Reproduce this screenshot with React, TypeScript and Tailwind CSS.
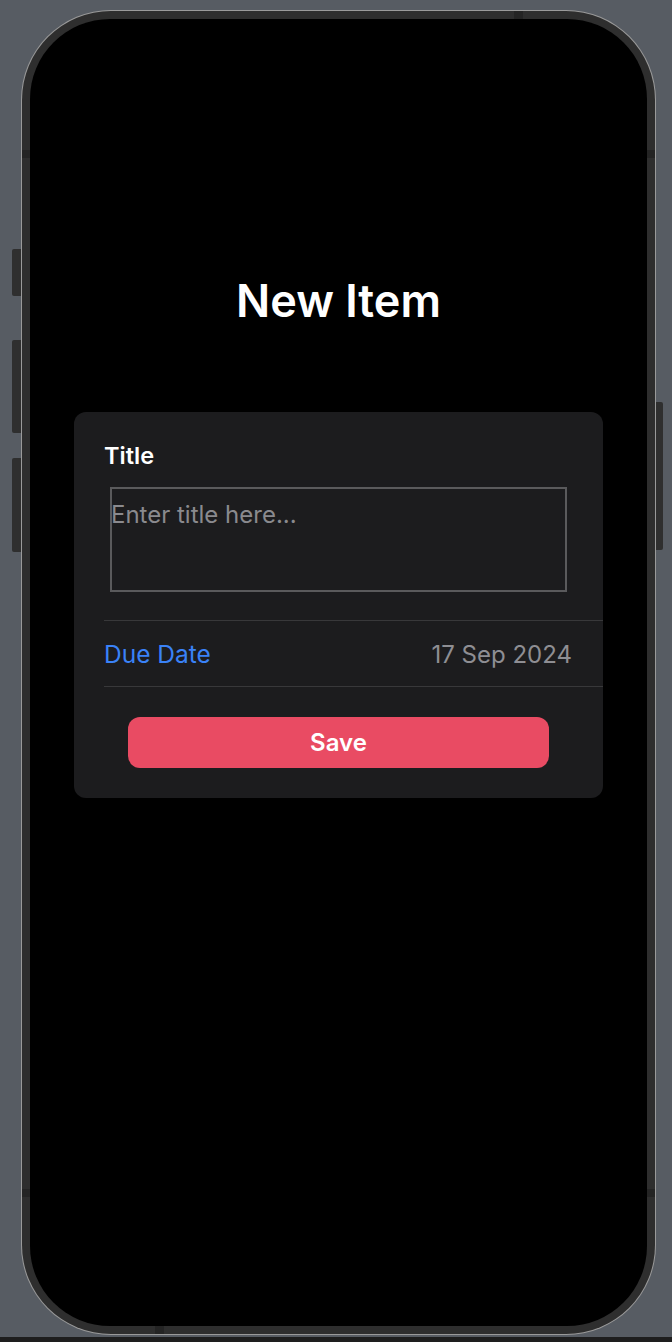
import React from "react";

export default function App() {
  const font = { fontFamily: "Inter, 'Noto Sans', sans-serif" };
  return (
    <div className="w-[672px] h-[1342px] bg-[#575c63] relative overflow-hidden" style={font}>
      {/* side buttons */}
      <div className="absolute left-[12px] top-[249px] w-[9px] h-[47px] bg-[#2f2f2f] rounded-l-[2px]" />
      <div className="absolute left-[12px] top-[340px] w-[9px] h-[93px] bg-[#2f2f2f] rounded-l-[2px]" />
      <div className="absolute left-[12px] top-[458px] w-[9px] h-[94px] bg-[#2f2f2f] rounded-l-[2px]" />
      <div className="absolute left-[655px] top-[402px] w-[8px] h-[148px] bg-[#2f2f2f] rounded-r-[2px]" />
      <div className="pt-[10px] pl-[21px]">
        <div className="relative w-[635px] h-[1325px] rounded-[90px] bg-[#9a9a9a] p-[1px]">
          <div className="w-full h-full rounded-[89px] bg-[#2e2e2e] p-[8px]">
            <div className="w-full h-full rounded-[80px] bg-black flex flex-col items-center">
              <h1 className="mt-[259px] text-[45px] leading-[46px] font-semibold text-white">New Item</h1>
              <div className="mt-[88px] w-[529px] bg-[#1c1c1e] rounded-[12px] pl-[30px] flex flex-col">
                <div className="pt-[29px] text-[23.5px] leading-[30px] font-semibold text-white">Title</div>
                <div className="mt-[16px] ml-[6px] w-[457px] h-[105px] border-2 border-[#5a5a5c] pt-[11px]">
                  <span className="text-[24px] leading-[30px] text-[#8a8a8e] ml-[-1px]">Enter title here...</span>
                </div>
                <div className="mt-[28px] h-[1px] bg-[#38383a]" />
                <div className="h-[65px] flex items-center justify-between pr-[31px] pt-[2px]">
                  <span className="text-[24.5px] text-[#3a82f7]">Due Date</span>
                  <span className="text-[24px] text-[#8e8e93]">17 Sep 2024</span>
                </div>
                <div className="h-[1px] bg-[#38383a]" />
                <div className="pt-[30px] pb-[30px] pr-[30px] flex justify-center">
                  <div className="w-[421px] h-[51px] rounded-[12px] bg-[#e94b63] flex items-center justify-center text-white text-[24px] font-semibold">
                    Save
                  </div>
                </div>
              </div>
            </div>
          </div>
          {/* antenna bands */}
          <div className="absolute left-[1px] top-[140px] w-[8px] h-[8px] bg-[#242424]" />
          <div className="absolute right-[1px] top-[140px] w-[8px] h-[8px] bg-[#242424]" />
          <div className="absolute left-[1px] top-[1179px] w-[8px] h-[8px] bg-[#242424]" />
          <div className="absolute right-[1px] top-[1179px] w-[8px] h-[8px] bg-[#242424]" />
          <div className="absolute left-[493px] top-[1px] w-[9px] h-[8px] bg-[#242424]" />
          <div className="absolute left-[134px] bottom-[1px] w-[9px] h-[8px] bg-[#242424]" />
        </div>
      </div>
      <div className="absolute left-0 bottom-0 w-full h-[5px] bg-[#1e1e1e]" />
    </div>
  );
}
